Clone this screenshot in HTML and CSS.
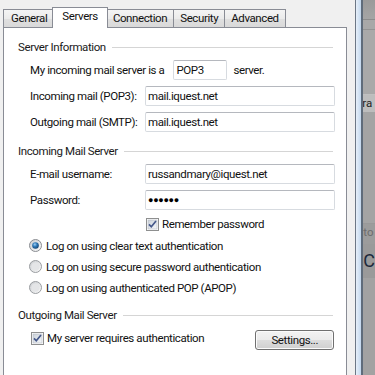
FILE: index.html
```html
<!DOCTYPE html>
<html lang="en">
<head>
  <meta charset="UTF-8">
  <title>Account Settings - Servers</title>
  <link rel="stylesheet" href="styles.css">
</head>
<body>
<div class="screen">

  <!-- Dialog -->
  <div class="dialog">
    <div class="tabs">
      <div class="tab">General</div>
      <div class="tab active">Servers</div>
      <div class="tab">Connection</div>
      <div class="tab">Security</div>
      <div class="tab">Advanced</div>
    </div>

    <div class="panel">

      <!-- Server Information -->
      <div class="group">
        <div class="group-title"><span>Server Information</span><i class="rule"></i></div>
        <div class="row">
          <span class="inline-label">My incoming mail server is a</span>
          <div class="input small">POP3</div>
          <span class="after">server.</span>
        </div>
        <div class="row">
          <span class="label">Incoming mail (POP3):</span>
          <div class="input">mail.iquest.net</div>
        </div>
        <div class="row">
          <span class="label">Outgoing mail (SMTP):</span>
          <div class="input">mail.iquest.net</div>
        </div>
      </div>

      <!-- Incoming Mail Server -->
      <div class="group second">
        <div class="group-title"><span>Incoming Mail Server</span><i class="rule"></i></div>
        <div class="row">
          <span class="label">E-mail username:</span>
          <div class="input">russandmary@iquest.net</div>
        </div>
        <div class="row">
          <span class="label">Password:</span>
          <div class="input dots">&#9679;&#9679;&#9679;&#9679;&#9679;&#9679;</div>
        </div>
        <div class="row check-row indent">
          <svg class="box" width="13" height="13" viewBox="0 0 13 13">
            <defs>
              <linearGradient id="cb1" x1="0" y1="0" x2="1" y2="1">
                <stop offset="0" stop-color="#cbd2da"/>
                <stop offset="1" stop-color="#f6f8fa"/>
              </linearGradient>
            </defs>
            <rect x="0.5" y="0.5" width="12" height="12" fill="#fff" stroke="#8e8f8f"/>
            <rect x="2" y="2" width="9" height="9" fill="url(#cb1)" stroke="#b4bac2" stroke-width="0.6"/>
            <path d="M3 6.3 L5.3 8.8 L10 3" fill="none" stroke="#45588a" stroke-width="1.7"/>
          </svg>
          <span>Remember password</span>
        </div>
        <div class="row radio-row">
          <svg class="radio" width="13" height="13" viewBox="0 0 13 13">
            <defs>
              <radialGradient id="rdOn" cx="0.4" cy="0.35" r="0.7">
                <stop offset="0" stop-color="#9fd0f5"/>
                <stop offset="0.45" stop-color="#2f79b8"/>
                <stop offset="1" stop-color="#123f6c"/>
              </radialGradient>
              <linearGradient id="rdBg" x1="0" y1="0" x2="1" y2="1">
                <stop offset="0" stop-color="#c9ccd0"/>
                <stop offset="1" stop-color="#fbfbfb"/>
              </linearGradient>
            </defs>
            <circle cx="6.5" cy="6.5" r="6" fill="url(#rdBg)" stroke="#8a8d92"/>
            <circle cx="6.5" cy="6.5" r="3.3" fill="url(#rdOn)"/>
          </svg>
          <span>Log on using clear text authentication</span>
        </div>
        <div class="row radio-row">
          <svg class="radio" width="13" height="13" viewBox="0 0 13 13">
            <circle cx="6.5" cy="6.5" r="6" fill="url(#rdBg)" stroke="#9a9da1"/>
            <circle cx="6.5" cy="6.5" r="4" fill="#e4e5e7"/>
          </svg>
          <span>Log on using secure password authentication</span>
        </div>
        <div class="row radio-row">
          <svg class="radio" width="13" height="13" viewBox="0 0 13 13">
            <circle cx="6.5" cy="6.5" r="6" fill="url(#rdBg)" stroke="#9a9da1"/>
            <circle cx="6.5" cy="6.5" r="4" fill="#e4e5e7"/>
          </svg>
          <span>Log on using authenticated POP (APOP)</span>
        </div>
      </div>

      <!-- Outgoing Mail Server -->
      <div class="group third">
        <div class="group-title"><span>Outgoing Mail Server</span><i class="rule"></i></div>
        <div class="row check-row">
          <svg class="box" width="13" height="13" viewBox="0 0 13 13">
            <rect x="0.5" y="0.5" width="12" height="12" fill="#fff" stroke="#8e8f8f"/>
            <rect x="2" y="2" width="9" height="9" fill="url(#cb1)" stroke="#b4bac2" stroke-width="0.6"/>
            <path d="M3 6.3 L5.3 8.8 L10 3" fill="none" stroke="#45588a" stroke-width="1.7"/>
          </svg>
          <span>My server requires authentication</span>
          <button class="button">Settings...</button>
        </div>
      </div>

    </div>
  </div>

  <!-- Window behind the dialog -->
  <div class="backdrop">
    <div class="frame"></div>
    <div class="behind">
      <div class="strip s1"></div>
      <div class="strip s2"></div>
      <div class="strip s3"></div>
      <div class="strip s4">ra</div>
      <div class="strip s5"></div>
      <div class="strip s6">to</div>
      <div class="strip s7">C</div>
      <div class="strip s8"></div>
    </div>
  </div>

</div>
</body>
</html>
```

FILE: styles.css
```css
* {
  box-sizing: border-box;
}
body {
  margin: 0;
  font-family: Roboto, "Liberation Sans", sans-serif;
  font-size: 11.5px;
  letter-spacing: -0.4px;
  color: #111;
  overflow: hidden;
}
.screen {
  display: flex;
  width: 375px;
  height: 375px;
}
.dialog {
  width: 358px;
  background-color: #f0f0f0;
  padding: 0 8px 0 3px;
  display: flex;
  flex-direction: column;
}

/* Tabs */
.tabs {
  display: flex;
  align-items: flex-end;
  height: 27px;
}
.tab {
  height: 18px;
  line-height: 16px;
  padding: 0 6px;
  margin-right: -1px;
  border: 1px solid #898c95;
  border-bottom: none;
  background: linear-gradient(#f4f4f4, #ebebeb 50%, #e0e0e0 51%, #d9d9d9);
  color: #111;
}
.tab:first-child {
  padding: 0 7px;
}
.tab.active {
  height: 21px;
  line-height: 16px;
  margin: 0 -2px -1px -2px;
  padding: 0 9px;
  background: #fff;
  position: relative;
  z-index: 1;
}

/* Panel */
.panel {
  flex: 1;
  background-color: #fff;
  border: 1px solid #898c95;
  border-bottom: none;
  padding: 11px 11px 0 14px;
}
.group {
  display: flex;
  flex-direction: column;
  gap: 6px;
}
.group.second {
  margin-top: 11px;
}
.group.third {
  margin-top: 12px;
}
.group-title {
  display: flex;
  align-items: center;
  height: 16px;
  margin-bottom: -1px;
  color: #1a1a1a;
}
.rule {
  flex: 1;
  height: 1px;
  margin: 1px 2px 0 6px;
  background-color: #d5d5d5;
}

/* Rows */
.row {
  display: flex;
  align-items: center;
  height: 20px;
  padding-left: 12px;
}
.label {
  width: 115px;
  flex: none;
}
.inline-label {
  margin-right: 9px;
}
.after {
  margin-left: 6px;
}
.input {
  flex: 1;
  height: 20px;
  line-height: 18px;
  padding: 0 2px;
  border: 1px solid #d7dbe0;
  border-top-color: #b5b8be;
  border-radius: 2px;
  background-color: #fff;
  white-space: nowrap;
}
.input.small {
  flex: none;
  width: 54px;
}
.input.dots {
  font-size: 9px;
  letter-spacing: -0.3px;
  color: #000;
  padding-left: 2px;
}
.check-row {
  height: 16px;
  gap: 3px;
  padding-left: 13px;
}
.check-row.indent {
  padding-left: 128px;
}
.radio-row {
  height: 15px;
  gap: 4px;
  padding-left: 11px;
}
.box, .radio {
  flex: none;
}
.group.third .check-row {
  height: 20px;
}
.button {
  margin-left: auto;
  margin-right: 1px;
  margin-top: 4px;
  width: 79px;
  height: 20px;
  padding: 0;
  border: 1px solid #707070;
  border-radius: 3px;
  background: linear-gradient(#f3f3f3, #ebebeb 50%, #dddddd 51%, #cfcfcf);
  font-family: inherit;
  font-size: 11.5px;
  letter-spacing: -0.4px;
  color: #111;
  box-shadow: inset 0 0 0 1px #fbfbfb;
}

/* Window behind */
.backdrop {
  flex: 1;
  display: flex;
}
.frame {
  width: 8px;
  border-left: 1px solid #6c7785;
  border-right: 2px solid #5f6c7b;
  background: linear-gradient(90deg, #e6eff9, #c3d8ee);
}
.behind {
  flex: 1;
  display: flex;
  flex-direction: column;
  background-color: #a3a3a3;
  color: #333;
  overflow: hidden;
  white-space: nowrap;
  letter-spacing: 0;
}
.strip {
  flex: none;
}
.s1 {
  height: 20px;
  background: linear-gradient(#9a9a9a, #a5a5a5);
  border-bottom: 1px solid #8c8c8c;
}
.s2 {
  height: 10px;
  background-color: #a8a8a8;
  border-bottom: 1px solid #939393;
}
.s3 {
  height: 65px;
  background-color: #a9a9a9;
  border-bottom: 1px solid #c0c0c0;
}
.s4 {
  height: 17px;
  line-height: 17px;
  background-color: #bdbdbd;
  color: #222;
  margin-left: -1px;
}
.s5 {
  height: 112px;
  background-color: #a4a4a4;
  border-bottom: 1px solid #999;
}
.s6 {
  height: 20px;
  line-height: 16px;
  background-color: #9c9c9c;
  color: #6d6d6d;
}
.s7 {
  height: 34px;
  line-height: 34px;
  font-size: 18px;
  background-color: #9a9a9a;
  color: #1d2a3c;
}
.s8 {
  flex: 1;
  background-color: #a2a2a2;
}
```
